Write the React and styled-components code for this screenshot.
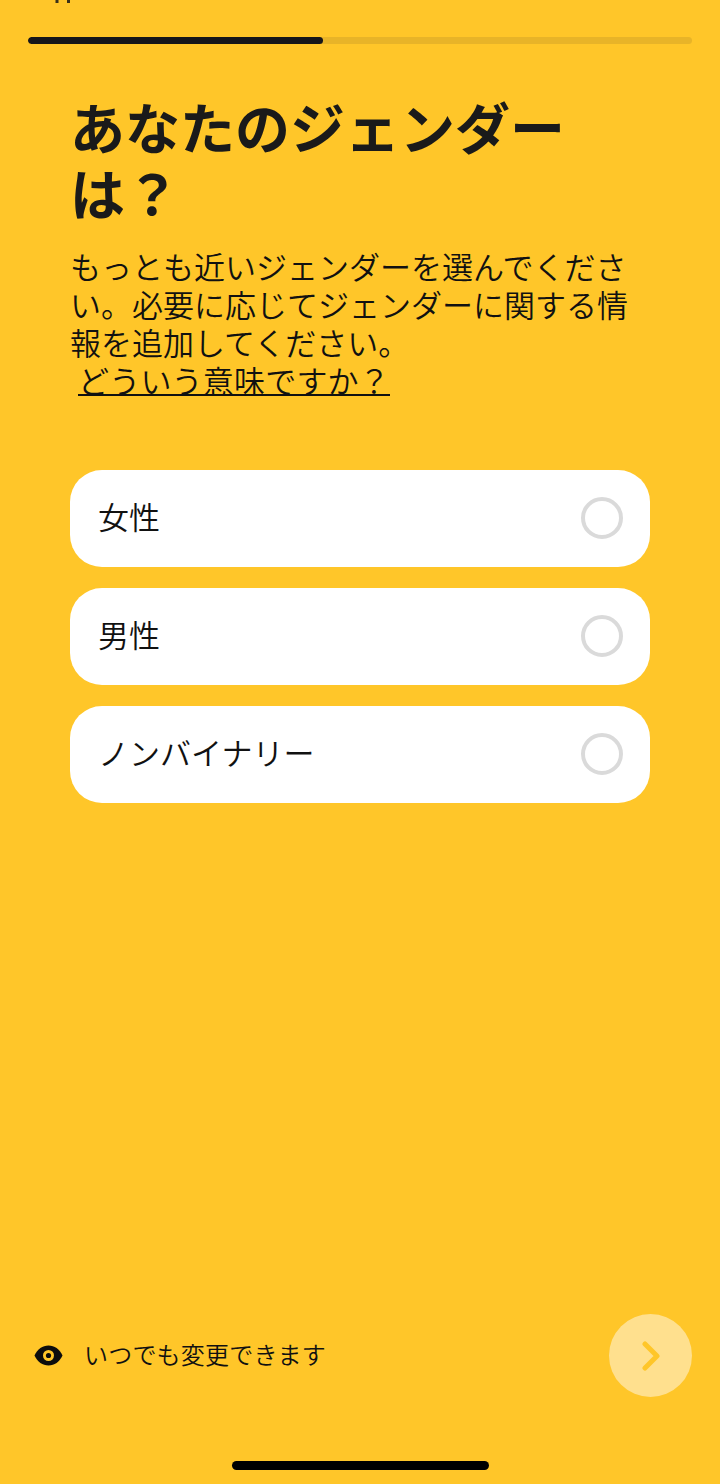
import styled, { createGlobalStyle } from 'styled-components';

const GlobalStyle = createGlobalStyle`
  html, body {
    margin: 0;
    padding: 0;
    background: #ffc629;
  }
`;

const Page = styled.div`
  position: relative;
  box-sizing: border-box;
  width: 720px;
  height: 1484px;
  overflow: hidden;
  background: #ffc629;
  color: #111;
  font-family: "Noto Sans CJK JP", "Noto Sans", sans-serif;
  display: flex;
  flex-direction: column;
  padding: 37px 28px 14px;
`;

const StatusClip = styled.svg`
  position: absolute;
  left: 50px;
  top: 0;
`;

const Progress = styled.div`
  height: 7px;
  border-radius: 4px;
  background: #e8b428;
  overflow: hidden;
  flex: none;
`;

const ProgressFill = styled.div`
  height: 100%;
  border-radius: 4px;
  background: #16161a;
`;

const Main = styled.div`
  padding: 48px 42px 0;
  display: flex;
  flex-direction: column;
`;

const Title = styled.h1`
  margin: 0;
  width: 510px;
  font-size: 55px;
  line-height: 66px;
  font-weight: 700;
  letter-spacing: 0;
  color: #1a1a1a;
`;

const Description = styled.p`
  margin: 23px 0 0;
  font-size: 31px;
  line-height: 38px;
  font-weight: 350;
  width: 570px;
`;

const InfoLink = styled.a`
  display: inline-block;
  margin-left: 8px;
  letter-spacing: 0.2px;
  text-decoration: underline;
  text-underline-offset: 1px;
  text-decoration-thickness: 2px;
  color: #111;
`;

const Options = styled.div`
  margin-top: 71px;
  display: flex;
  flex-direction: column;
  gap: 21px;
`;

const Option = styled.div`
  height: 97px;
  box-sizing: border-box;
  border-radius: 32px;
  background: #fff;
  padding: 0 27px 0 28px;
  display: flex;
  align-items: center;
  justify-content: space-between;
  font-size: 31px;
  font-weight: 350;
`;

const OptionLabel = styled.span`
  padding-bottom: 6px;
`;

const Radio = styled.span`
  width: 42px;
  height: 42px;
  box-sizing: border-box;
  border: 4px solid #dadada;
  border-radius: 50%;
  background: #fff;
  margin-bottom: 1px;
`;

const Footer = styled.div`
  margin-top: auto;
  display: flex;
  align-items: center;
  justify-content: space-between;
  padding-left: 6px;
`;

const Note = styled.div`
  display: flex;
  align-items: center;
  gap: 21px;
  font-size: 24px;
  font-weight: 350;
  letter-spacing: 0.2px;
`;

const NoteText = styled.span`
  padding-bottom: 4px;
`;

const NextButton = styled.button`
  width: 83px;
  height: 83px;
  border: 0;
  padding: 0;
  border-radius: 50%;
  background: #ffe08e;
  display: flex;
  align-items: center;
  justify-content: center;
`;

const HomeWrap = styled.div`
  margin-top: 64px;
  display: flex;
  justify-content: center;
`;

const HomeBar = styled.div`
  width: 257px;
  height: 9px;
  border-radius: 5px;
  background: #000;
`;

const options = ['女性', '男性', 'ノンバイナリー'];

const EyeIcon = () => (
  <svg width="29" height="21" viewBox="0 0 29 21">
    <path d="M0.5 10.5C3.5 4 8.5 0.5 14.5 0.5S25.5 4 28.5 10.5C25.5 17 20.5 20.5 14.5 20.5S3.5 17 0.5 10.5Z" fill="#0d0d0d" />
    <circle cx="14.5" cy="10.5" r="5.5" fill="#ffc629" />
    <circle cx="14.5" cy="10.5" r="2.6" fill="#0d0d0d" />
  </svg>
);

const ChevronIcon = () => (
  <svg width="18" height="30" viewBox="0 0 18 30" fill="none">
    <path d="M3 3L15 15L3 27" stroke="#ffc629" strokeWidth="5" strokeLinecap="round" strokeLinejoin="round" />
  </svg>
);

const App = () => (
  <Page>
    <GlobalStyle />
    <StatusClip width="24" height="5" viewBox="0 0 24 5">
      <path d="M7 0v3M18.5 0v3" stroke="#3a3018" strokeWidth="3" />
    </StatusClip>
    <Progress>
      <ProgressFill style={{ width: `${(295 / 664) * 100}%` }} />
    </Progress>
    <Main>
      <Title>あなたのジェンダーは？</Title>
      <Description>
        もっとも近いジェンダーを選んでください。必要に応じてジェンダーに関する情報を追加してください。
        <br />
        <InfoLink>どういう意味ですか？</InfoLink>
      </Description>
      <Options>
        {options.map((label) => (
          <Option key={label}>
            <OptionLabel>{label}</OptionLabel>
            <Radio />
          </Option>
        ))}
      </Options>
    </Main>
    <Footer>
      <Note>
        <EyeIcon />
        <NoteText>いつでも変更できます</NoteText>
      </Note>
      <NextButton>
        <ChevronIcon />
      </NextButton>
    </Footer>
    <HomeWrap>
      <HomeBar />
    </HomeWrap>
  </Page>
);

export default App;
